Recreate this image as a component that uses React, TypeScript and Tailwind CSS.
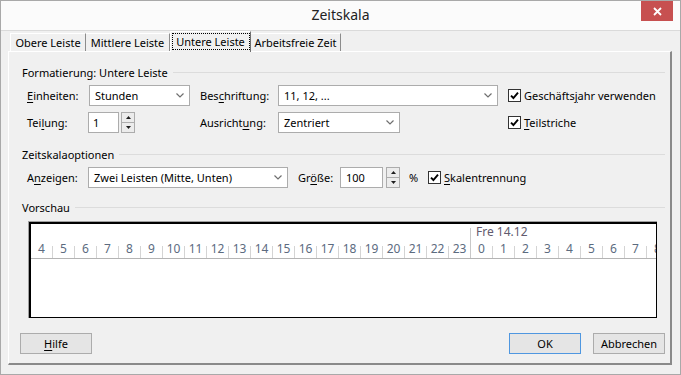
import type { ReactNode } from 'react';

const hoursA = [4, 5, 6, 7, 8, 9, 10, 11, 12, 13, 14, 15, 16, 17, 18, 19, 20, 21, 22];
const hoursB = [0, 1, 2, 3, 4, 5, 6, 7, 8];

function Chevron() {
  return (
    <svg width="8" height="5" viewBox="0 0 8 5">
      <path d="M0.5 0.5 L4 4 L7.5 0.5" fill="none" stroke="#6f6f6f" strokeWidth="1.2" />
    </svg>
  );
}

function Select({ value, className }: { value: string; className: string }) {
  return (
    <div className={`flex h-[21px] shrink-0 items-center justify-between border border-[#acacac] bg-white pl-[5px] pr-[5px] ${className}`}>
      <span>{value}</span>
      <Chevron />
    </div>
  );
}

function Spinner({ className }: { className: string }) {
  return (
    <div className={`flex h-[21px] w-[14px] shrink-0 flex-col ${className}`}>
      <div className="flex h-[11px] items-center justify-center border border-[#acacac] bg-[#ececec]">
        <svg width="5" height="3" viewBox="0 0 5 3">
          <polygon points="0,3 2.5,0 5,3" fill="#1e1e1e" />
        </svg>
      </div>
      <div className="-mt-px flex h-[11px] items-center justify-center border border-[#acacac] bg-[#ececec]">
        <svg width="5" height="3" viewBox="0 0 5 3">
          <polygon points="0,0 5,0 2.5,3" fill="#1e1e1e" />
        </svg>
      </div>
    </div>
  );
}

function Check({ children, className = '' }: { children: ReactNode; className?: string }) {
  return (
    <div className={`flex items-center ${className}`}>
      <div className="flex h-[13px] w-[13px] shrink-0 items-center justify-center border border-[#333333] bg-white">
        <svg width="9" height="9" viewBox="0 0 9 9">
          <path d="M1 4.6 L3.4 7 L8 1.6" fill="none" stroke="#000" strokeWidth="1.9" />
        </svg>
      </div>
      <span className="ml-[3px] whitespace-nowrap">{children}</span>
    </div>
  );
}

function Section({ title, className = '' }: { title: string; className?: string }) {
  return (
    <div className={`flex h-[16px] items-center ${className}`}>
      <span className="ml-[2px] whitespace-nowrap">{title}</span>
      <div className="ml-[5px] h-px flex-1 bg-[#dcdcdc]" />
    </div>
  );
}

function U({ children }: { children: ReactNode }) {
  return <span className="underline underline-offset-2">{children}</span>;
}

function Cell({ n, tick = true, w = 'w-[22px]' }: { n: number; tick?: boolean; w?: string }) {
  return (
    <div className={`flex h-full shrink-0 ${w}`}>
      <div className="flex flex-1 items-center justify-center">{n}</div>
      {tick && <div className="h-[12px] w-px self-end bg-[#d4d4d4]" />}
    </div>
  );
}

function Button({ children, primary = false }: { children: ReactNode; primary?: boolean }) {
  return (
    <div
      className={`flex h-[21px] w-[72px] items-center justify-center border bg-[#e5e5e5] ${
        primary ? 'border-[#4f97e0]' : 'border-[#acacac]'
      }`}
    >
      {children}
    </div>
  );
}

export default function App() {
  return (
    <div className="flex h-[375px] w-[681px] flex-col overflow-hidden border border-[#a9a9a9] bg-[#f0f0f0] font-['Noto_Sans',sans-serif] text-[11px] leading-none whitespace-nowrap text-black">
      {/* title bar */}
      <div className="flex h-[29px] shrink-0 bg-[#fbfbfb]">
        <div className="w-[39px]" />
        <div className="flex flex-1 items-center justify-center pb-px text-[14px] text-[#222]">Zeitskala</div>
        <div className="w-[39px] pr-[6px]">
          <div className="flex h-[20px] w-[32px] items-center justify-center bg-[#c75050]">
            <svg width="9" height="9" viewBox="0 0 9 9">
              <path d="M1 1 L8 8 M8 1 L1 8" stroke="#fff" strokeWidth="1.8" />
            </svg>
          </div>
        </div>
      </div>

      {/* body */}
      <div className="flex flex-1 flex-col border-t border-[#dadada] px-[7px]">
        {/* tabs */}
        <div className="flex h-[20px] shrink-0 items-end pl-[2px]">
          <div className="flex h-[18px] w-[76px] items-center justify-center border-t border-l border-r border-t-white border-l-white border-r-[#8c8c8c]">
            Obere Leiste
          </div>
          <div className="flex h-[18px] w-[84px] items-center justify-center border-t border-r border-t-white border-r-[#8c8c8c]">
            Mittlere Leiste
          </div>
          <div className="relative z-10 -mb-px flex h-[21px] w-[81px] items-start justify-center border-t border-l border-r border-t-white border-l-white border-r-[#6f6f6f] bg-[#f0f0f0] pt-px">
            <span className="flex h-[17px] w-[78px] items-center justify-center border border-dotted border-black">Untere Leiste</span>
          </div>
          <div className="flex h-[18px] w-[90px] items-center justify-center border-t border-r border-t-white border-r-[#8c8c8c]">
            Arbeitsfreie Zeit
          </div>
        </div>

        {/* panel */}
        <div className="flex h-[314px] w-[664px] shrink-0 flex-col border-t border-l border-r-2 border-b-2 border-t-white border-l-white border-r-[#8a8a8a] border-b-[#8a8a8a] pt-[12px] pr-[5px] pl-[11px]">
          <Section title="Formatierung: Untere Leiste" />

          <div className="mt-[5px] flex h-[21px] items-center pl-[7px]">
            <div className="flex w-[173px] items-center">
              <span className="w-[62px]">
                <U>E</U>inheiten:
              </span>
              <Select value="Stunden" className="w-[101px]" />
            </div>
            <div className="flex w-[308px] items-center">
              <span className="w-[78px]">
                Bes<U>c</U>hriftung:
              </span>
              <Select value="11, 12, ..." className="w-[220px]" />
            </div>
            <Check>
              Geschäfts<U>j</U>ahr verwenden
            </Check>
          </div>

          <div className="mt-[6px] flex h-[21px] items-center pl-[7px]">
            <div className="flex w-[173px] items-center">
              <span className="w-[61px]">
                Tei<U>l</U>ung:
              </span>
              <div className="flex h-[21px] w-[31px] items-center border border-[#acacac] bg-white pl-[4px]">1</div>
              <Spinner className="ml-[2px]" />
            </div>
            <div className="flex w-[308px] items-center">
              <span className="w-[78px]">
                Ausricht<U>u</U>ng:
              </span>
              <Select value="Zentriert" className="w-[122px]" />
            </div>
            <Check>
              <U>T</U>eilstriche
            </Check>
          </div>

          <Section title="Zeitskalaoptionen" className="mt-[13px]" />

          <div className="mt-[5px] flex h-[21px] items-center pl-[7px]">
            <span className="w-[61px]">
              A<U>n</U>zeigen:
            </span>
            <Select value="Zwei Leisten (Mitte, Unten)" className="w-[200px]" />
            <span className="ml-[10px] w-[42px]">
              Gr<U>ö</U>ße:
            </span>
            <div className="flex h-[21px] w-[43px] items-center border border-[#acacac] bg-white pl-[5px]">100</div>
            <Spinner className="ml-[3px]" />
            <span className="ml-[9px] w-[19px]">%</span>
            <Check>
              <U>S</U>kalentrennung
            </Check>
          </div>

          <Section title="Vorschau" className="mt-[11px]" />

          {/* preview */}
          <div className="mt-[6px] ml-[8px] w-[629px] border-t border-l border-[#a0a0a0]">
            <div className="h-[96px] overflow-hidden border-t-2 border-l-2 border-r border-b border-black bg-white">
              <div className="flex h-[35px] border-b border-[#b4b4b4] text-[12px] text-[#5c6b7f]">
                <div className="flex w-[439px] shrink-0 flex-col justify-end">
                  <div className="flex h-[18px]">
                    {hoursA.map((n) => (
                      <Cell key={n} n={n} />
                    ))}
                    <Cell n={23} tick={false} w="w-[21px]" />
                  </div>
                </div>
                <div className="flex shrink-0 flex-col">
                  <div className="flex h-[17px]">
                    <div className="mt-[4px] w-px bg-[#c8c8c8]" />
                    <span className="flex items-center pl-[5px] text-[#625a6e]">Fre 14.12</span>
                  </div>
                  <div className="flex h-[18px] border-l border-[#c8c8c8]">
                    {hoursB.map((n) => (
                      <Cell key={n} n={n} />
                    ))}
                  </div>
                </div>
              </div>
            </div>
          </div>

          {/* buttons */}
          <div className="mt-[15px] flex items-center justify-between">
            <Button>
              <U>H</U>ilfe
            </Button>
            <div className="flex gap-[12px]">
              <Button primary>OK</Button>
              <Button>Abbrechen</Button>
            </div>
          </div>
        </div>
      </div>
    </div>
  );
}
